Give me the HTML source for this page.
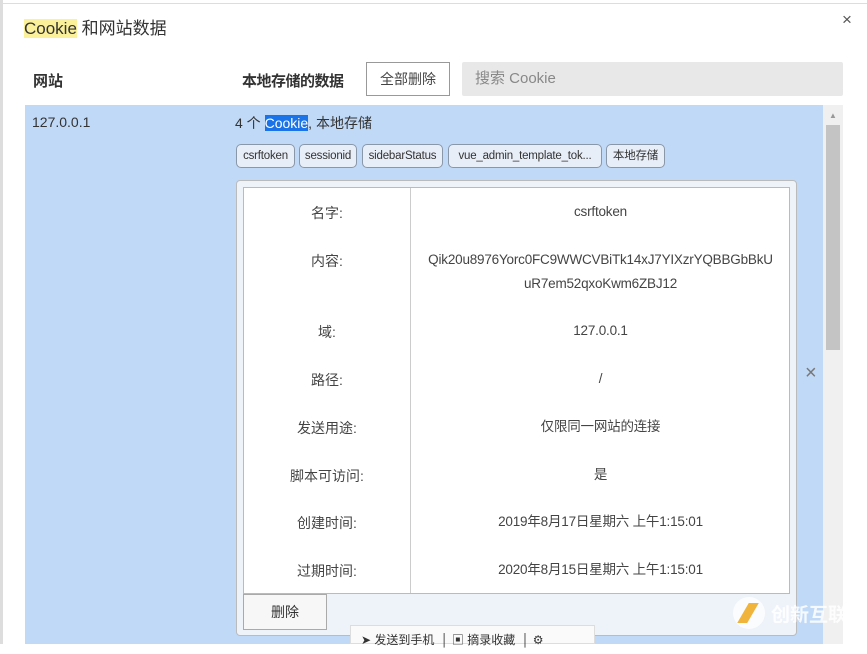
<!DOCTYPE html><html><head><meta charset="utf-8"><style>
body{margin:0;width:867px;height:644px;overflow:hidden;background:#fff;font-family:"Liberation Sans","Noto Sans CJK SC",sans-serif;position:relative;color:#333}
.a{position:absolute}
.chip{position:absolute;top:144px;height:22px;border:1px solid #8a97a8;border-radius:5px;background:#e8eef7;font-size:11.5px;line-height:22px;text-align:center;color:#333;letter-spacing:-0.2px}
.lab{position:absolute;left:244px;width:166px;text-align:center;font-size:14px;color:#444}
.val{position:absolute;left:411px;width:379px;text-align:center;font-size:13.5px;color:#444;line-height:24px;letter-spacing:-0.2px}
</style></head><body>
<div class="a" style="left:0;top:0;width:3px;height:644px;background:#ddd"></div>
<div class="a" style="left:0;top:3px;width:867px;height:1px;background:#ddd"></div>
<div class="a" style="left:24px;top:17px;font-size:17px;line-height:24px"><span style="background:#fbf19a">Cookie</span> 和网站数据</div>
<div class="a" style="left:842px;top:10px;font-size:17px;color:#555">×</div>
<div class="a" style="left:33px;top:70px;font-size:15px;font-weight:bold">网站</div>
<div class="a" style="left:242px;top:70px;font-size:15px;font-weight:bold;letter-spacing:-0.5px">本地存储的数据</div>
<div class="a" style="left:366px;top:62px;width:84px;height:34px;border:1px solid #999;box-sizing:border-box;font-size:14px;text-align:center;line-height:32px;color:#444">全部删除</div>
<div class="a" style="left:462px;top:62px;width:381px;height:34px;background:#e8e8e8;border-radius:2px;font-size:15px;line-height:34px;padding-left:13px;box-sizing:border-box;color:#888">搜索 Cookie</div>
<div class="a" style="left:25px;top:105px;width:798px;height:539px;background:#c0d9f7"></div>
<div class="a" style="left:823px;top:105px;width:20px;height:539px;background:#f0f0f0"></div>
<div class="a" style="left:826px;top:125px;width:14px;height:225px;background:#c4c4c4"></div>
<div class="a" style="left:829px;top:111px;font-size:8px;color:#999">▲</div>
<div class="a" style="left:32px;top:114px;font-size:14px">127.0.0.1</div>
<div class="a" style="left:235px;top:113px;font-size:14px">4 个 <span style="background:#1a73e8;color:#fff">Cookie</span>, 本地存储</div>
<div class="chip" style="left:236px;width:57px">csrftoken</div>
<div class="chip" style="left:299px;width:56px">sessionid</div>
<div class="chip" style="left:362px;width:79px">sidebarStatus</div>
<div class="chip" style="left:448px;width:152px">vue_admin_template_tok...</div>
<div class="chip" style="left:606px;width:57px">本地存储</div>
<div class="a" style="left:236px;top:180px;width:561px;height:456px;background:#eef3fa;border:1px solid #bbb;border-radius:4px;box-sizing:border-box"></div>
<div class="a" style="left:243px;top:187px;width:547px;height:407px;background:#fff;border:1px solid #bbb;box-sizing:border-box"></div>
<div class="a" style="left:410px;top:188px;width:1px;height:405px;background:#ccc"></div>
<div class="lab" style="top:203px">名字:</div><div class="val" style="top:200px">csrftoken</div>
<div class="lab" style="top:251px">内容:</div><div class="val" style="top:248px">Qik20u8976Yorc0FC9WWCVBiTk14xJ7YIXzrYQBBGbBkU<br>uR7em52qxoKwm6ZBJ12</div>
<div class="lab" style="top:322px">域:</div><div class="val" style="top:319px">127.0.0.1</div>
<div class="lab" style="top:370px">路径:</div><div class="val" style="top:367px">/</div>
<div class="lab" style="top:418px">发送用途:</div><div class="val" style="top:415px">仅限同一网站的连接</div>
<div class="lab" style="top:466px">脚本可访问:</div><div class="val" style="top:463px">是</div>
<div class="lab" style="top:513px">创建时间:</div><div class="val" style="top:510px">2019年8月17日星期六 上午1:15:01</div>
<div class="lab" style="top:561px">过期时间:</div><div class="val" style="top:558px">2020年8月15日星期六 上午1:15:01</div>
<div class="a" style="left:243px;top:594px;width:84px;height:36px;border:1px solid #aaa;background:#f7f7f7;box-sizing:border-box;font-size:14px;text-align:center;line-height:34px">删除</div>
<div class="a" style="left:805px;top:362px;font-size:20px;color:#777">×</div>
<div class="a" style="left:350px;top:625px;width:245px;height:19px;background:#fafafa;border:1px solid #ddd;font-size:12px;line-height:28px;color:#333;box-sizing:border-box;padding-left:10px;white-space:nowrap">➤ 发送到手机 &nbsp;│ ▣ 摘录收藏 &nbsp;│ ⚙</div>
<div class="a" style="left:733px;top:597px;width:32px;height:32px;border-radius:50%;background:rgba(255,255,255,.75)"></div>
<div class="a" style="left:743px;top:603px;width:10px;height:20px;background:#f0b43c;transform:skewX(-30deg)"></div>
<div class="a" style="left:771px;top:600px;font-size:19px;color:rgba(255,255,255,.85);font-weight:bold">创新互联</div>
</body></html>
